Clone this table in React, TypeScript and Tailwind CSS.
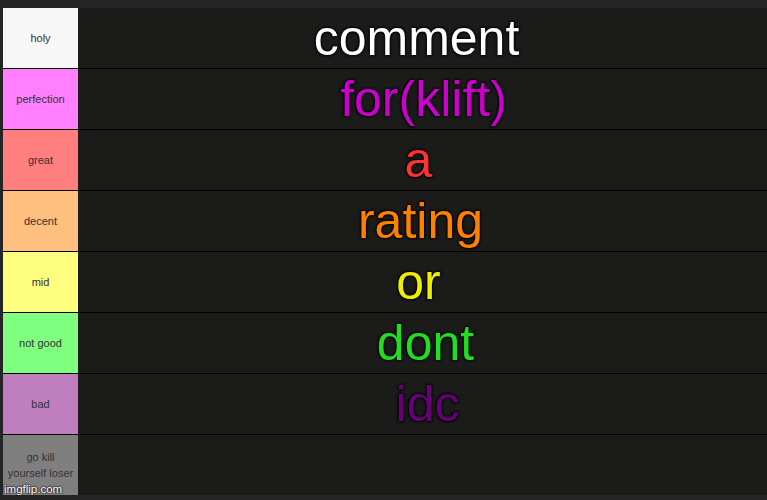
import React from "react";

const rows = [
  { label: "holy", bg: "bg-[#f7f7f7]", text: "comment", color: "text-[#ffffff]", off: "mr-[12px]" },
  { label: "perfection", bg: "bg-[#ff7fff]", text: "for(klift)", color: "text-[#cc00cc]", off: "ml-[2px]" },
  { label: "great", bg: "bg-[#ff7f7f]", text: "a", color: "text-[#ff3333]", off: "mr-[8px]" },
  { label: "decent", bg: "bg-[#ffbf7f]", text: "rating", color: "text-[#ff8000]", off: "mr-[4px]" },
  { label: "mid", bg: "bg-[#ffff7f]", text: "or", color: "text-[#eeee00]", off: "mr-[8px]" },
  { label: "not good", bg: "bg-[#7fff7f]", text: "dont", color: "text-[#22dd22]", off: "ml-[6px]" },
  { label: "bad", bg: "bg-[#bf7fbf]", text: "idc", color: "text-[#660077]", off: "ml-[10px]" },
  { label: "go kill\nyourself loser", bg: "bg-[#7f7f7f]", text: "", color: "", off: "" },
];

export default function App() {
  return (
    <div
      className="relative w-[767px] h-[500px] bg-[#252525] pt-[8px] pl-[3px] overflow-hidden"
      style={{ fontFamily: '"Liberation Sans", Arial, sans-serif' }}
    >
      <div className="flex flex-col">
        {rows.map((r, i) => (
          <div
            key={i}
            className={
              "flex " + (i < rows.length - 1 ? "h-[61px] border-b border-black" : "h-[60px]")
            }
          >
            <div
              className={
                "w-[75px] shrink-0 flex items-center justify-center text-center text-[11px] leading-[16px] text-[#333333] whitespace-pre-line " +
                r.bg
              }
            >
              {r.label}
            </div>
            <div className="flex-1 bg-[#1b1b1a] flex items-center justify-center">
              {r.text && (
                <span
                  className={
                    "text-[50px] leading-[56px] [text-shadow:0_0_3px_#000,0_0_3px_#000,0_0_2px_#000] " +
                    r.color +
                    " " +
                    r.off
                  }
                >
                  {r.text}
                </span>
              )}
            </div>
          </div>
        ))}
      </div>
      <div className="absolute left-[4px] top-[482px] text-[11.5px] leading-[14px] text-white [text-shadow:0_0_2px_#000,0_0_2px_#000]">
        imgflip.com
      </div>
    </div>
  );
}
